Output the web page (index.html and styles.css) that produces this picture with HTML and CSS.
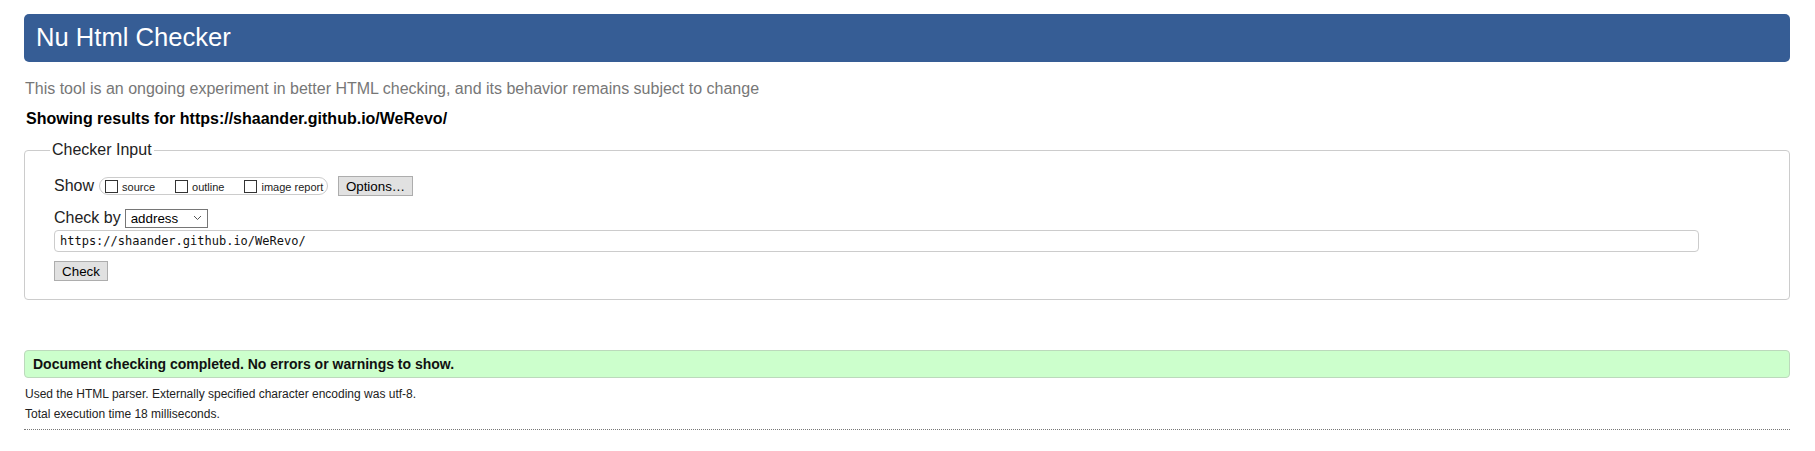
FILE: index.html
```html
<!DOCTYPE html>
<html lang="en">
<head>
<meta charset="utf-8">
<title>Nu Html Checker</title>
<link rel="stylesheet" href="styles.css">
</head>
<body>
<h1 class="title-bar">Nu Html Checker</h1>
<p class="intro">This tool is an ongoing experiment in better HTML checking, and its behavior remains subject to change</p>
<p class="showing">Showing results for https://shaander.github.io/WeRevo/</p>
<fieldset class="checker">
  <legend class="checker-legend">Checker Input</legend>
  <div class="row show-row">
    <span class="label">Show</span>
    <span class="show-box">
      <span class="opt"><span class="cb"></span><span class="opt-text">source</span></span>
      <span class="opt"><span class="cb"></span><span class="opt-text">outline</span></span>
      <span class="opt"><span class="cb"></span><span class="opt-text">image report</span></span>
    </span>
    <span class="btn options-btn">Options…</span>
  </div>
  <div class="row checkby-row">
    <span class="label">Check by</span>
    <span class="select">address<svg class="chev" width="9" height="6" viewBox="0 0 9 6"><path d="M1 1l3.5 3.5L8 1" fill="none" stroke="#555" stroke-width="1"/></svg></span>
  </div>
  <div class="url">https://shaander.github.io/WeRevo/</div>
  <div class="row"><span class="btn check-btn">Check</span></div>
</fieldset>
<div class="success">Document checking completed. No errors or warnings to show.</div>
<p class="meta">Used the HTML parser. Externally specified character encoding was utf-8.</p>
<p class="meta">Total execution time 18 milliseconds.</p>
<div class="dotted"></div>
</body>
</html>
```
FILE: styles.css
```css
html, body {
  margin: 0;
  background: #fff;
}
body {
  padding: 14px 25px 0 24px;
  font-family: "Liberation Sans", Arial, sans-serif;
  color: #000;
}
.title-bar {
  margin: 0;
  height: 48px;
  box-sizing: border-box;
  padding: 8px 12px 0;
  background: #365d95;
  color: #fff;
  font-weight: normal;
  font-size: 25.6px;
  line-height: 30px;
  border-radius: 5px;
}
.intro {
  margin: 17px 0 0 1px;
  font-size: 16px;
  line-height: 19px;
  color: #777;
}
.showing {
  margin: 11px 0 0 2px;
  font-size: 16px;
  line-height: 19px;
  font-weight: bold;
}
.checker {
  margin: 13px 0 0 0;
  padding: 8px 20px 18px 29px;
  border: 1px solid #ccc;
  border-radius: 4px;
  min-width: 0;
}
.checker-legend {
  margin-left: -4px;
  padding: 0 2px;
  font-size: 16px;
  line-height: 18px;
  color: #222;
}
.row {
  display: flex;
  align-items: center;
}
.label {
  font-size: 16px;
  color: #222;
}
.show-row {
  height: 20px;
  margin-top: 9px;
}
.show-box {
  display: flex;
  align-items: center;
  margin-left: 5px;
  width: 229px;
  box-sizing: border-box;
  height: 18px;
  padding-left: 5px;
  border: 1px solid #ccc;
  border-radius: 9px;
}
.opt {
  display: flex;
  align-items: center;
  margin-right: 20px;
}
.opt:last-child { margin-right: 0; }
.cb {
  width: 13px;
  height: 13px;
  box-sizing: border-box;
  border: 1px solid #333;
  background: #fff;
  margin-right: 4px;
}
.opt-text {
  font-size: 11px;
  color: #222;
  position: relative;
  top: 1px;
}
.btn {
  display: inline-flex;
  align-items: center;
  justify-content: center;
  box-sizing: border-box;
  height: 20px;
  border: 1px solid #adadad;
  background: #e1e1e1;
  font-size: 13.33px;
  color: #000;
}
.options-btn {
  width: 75px;
  margin-left: 10px;
}
.checkby-row {
  margin-top: 12px;
  height: 20px;
}
.select {
  display: flex;
  align-items: center;
  justify-content: space-between;
  margin-left: 4px;
  width: 83px;
  height: 19px;
  box-sizing: border-box;
  padding: 0 5px 0 5px;
  border: 1px solid #767676;
  font-size: 13.33px;
  color: #000;
}
.chev { display: block; }
.url {
  margin-top: 2px;
  height: 22px;
  box-sizing: border-box;
  width: 1645px;
  border: 1px solid #ccc;
  border-radius: 4px;
  padding: 0 5px;
  font-family: "DejaVu Sans Mono", "Liberation Mono", monospace;
  font-size: 12px;
  line-height: 20px;
  color: #111;
}
.check-btn {
  width: 54px;
  margin-top: 9px;
}
.success {
  margin-top: 50px;
  height: 28px;
  box-sizing: border-box;
  padding: 0 8px;
  background: #ccffcc;
  border: 1px solid #bcd9bc;
  border-radius: 4px;
  font-weight: bold;
  font-size: 14px;
  line-height: 26px;
  color: #111;
}
.meta {
  margin: 9px 0 0 1px;
  font-size: 12px;
  line-height: 14px;
  color: #222;
}
.meta + .meta { margin-top: 6px; }
.dotted {
  margin-top: 8px;
  border-top: 1px dotted #777;
}
```
